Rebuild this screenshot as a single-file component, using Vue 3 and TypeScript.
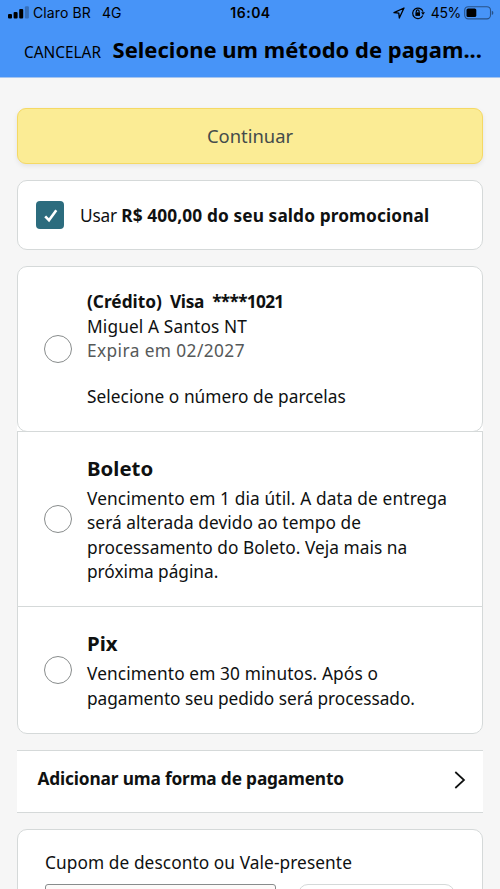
<script setup lang="ts">
import { ref } from 'vue'

interface Line {
  text: string
  fit: string
}

interface Method {
  id: string
  title: string
  lines: Line[]
}

const useBalance = ref(true)
const selected = ref<string | null>(null)

const methods: Method[] = [
  {
    id: 'boleto',
    title: 'Boleto',
    lines: [
      { text: 'Vencimento em 1 dia útil. A data de entrega', fit: 'fit-wide' },
      { text: 'será alterada devido ao tempo de', fit: 'fit-mid' },
      { text: 'processamento do Boleto. Veja mais na', fit: 'fit-base' },
      { text: 'próxima página.', fit: 'fit-snug' },
    ],
  },
  {
    id: 'pix',
    title: 'Pix',
    lines: [
      { text: 'Vencimento em 30 minutos. Após o', fit: 'fit-wide' },
      { text: 'pagamento seu pedido será processado.', fit: 'fit-snug' },
    ],
  },
]
</script>

<template>
  <div class="screen">
    <header class="header">
      <div class="status">
        <div class="status-left">
          <svg class="signal" viewBox="0 0 21 13" width="21" height="13">
            <rect x="0" y="8" width="4" height="4.6" rx="1.1" />
            <rect x="5.6" y="6" width="4" height="6.6" rx="1.1" />
            <rect x="11.2" y="3" width="4" height="9.6" rx="1.1" />
            <rect x="16.9" y="0.2" width="4" height="12.4" rx="1.1" opacity="0.25" />
          </svg>
          <span class="carrier">Claro BR</span>
          <span class="network">4G</span>
        </div>
        <span class="clock">16:04</span>
        <div class="status-right">
          <svg class="locate" viewBox="0 0 12 12" width="12" height="12">
            <path d="M11 1 L1 5.7 L5.8 6.2 L6.3 11 Z" />
          </svg>
          <svg class="rotation" viewBox="0 0 14 14" width="14" height="14">
            <path class="ring" d="M11.8 9.6 A5.3 5.3 0 1 1 12 5.6" />
            <path d="M10.1 6.3 H14 L12 9 Z" />
            <path d="M4.4 6.3 H9 V9.9 H4.4 Z" />
            <path class="ring" d="M5.3 6.6 V5.3 A1.4 1.4 0 0 1 8.1 5.3 V6.6" />
          </svg>
          <span class="percent">45%</span>
          <svg class="battery" viewBox="0 0 30 14" width="30" height="14">
            <rect class="case" x="0.7" y="0.7" width="25.8" height="12.2" rx="3.6" />
            <rect x="2.5" y="2.5" width="9.8" height="8.6" rx="1.6" />
            <path class="tip" d="M27.8 4.8 Q29.4 5.4 29.4 6.9 Q29.4 8.4 27.8 9 Z" />
          </svg>
        </div>
      </div>
      <div class="nav">
        <span class="cancel">CANCELAR</span>
        <h1 class="title">Selecione um método de pagam...</h1>
      </div>
    </header>

    <main class="content">
      <button class="continue" type="button">Continuar</button>

      <section class="card balance" @click="useBalance = !useBalance">
        <span class="check" :class="{ on: useBalance }">
          <svg v-if="useBalance" viewBox="0 0 28 28" width="28" height="28">
            <path d="M9.2 15.3 L13 19.2 L20.3 9.2" />
          </svg>
        </span>
        <p class="balance-text">
          <span class="use">Usar </span><b>R$ 400,00 do seu saldo promocional</b>
        </p>
      </section>

      <div class="methods">
        <section class="method card credit" @click="selected = 'visa'">
          <span class="radio" :class="{ on: selected === 'visa' }"></span>
          <div class="body">
            <p class="line strong">
              <span>(Crédito)</span><span class="brand">Visa</span><span class="digits">****1021</span>
            </p>
            <p class="line fit-wide">Miguel A Santos NT</p>
            <p class="line muted">Expira em 02/2027</p>
            <p class="line note fit-base">Selecione o número de parcelas</p>
          </div>
        </section>
        <section
          v-for="m in methods"
          :key="m.id"
          class="method"
          :class="m.id"
          @click="selected = m.id"
        >
          <span class="radio" :class="{ on: selected === m.id }"></span>
          <div class="body">
            <h2 class="name">{{ m.title }}</h2>
            <p v-for="l in m.lines" :key="l.text" class="line" :class="l.fit">{{ l.text }}</p>
          </div>
        </section>
      </div>

      <section class="add">
        <span class="add-label">Adicionar uma forma de pagamento</span>
        <svg viewBox="0 0 12 18" width="12" height="18">
          <path d="M1.3 1 L10 9 L1.3 17" />
        </svg>
      </section>

      <section class="card coupon">
        <label class="coupon-label">Cupom de desconto ou Vale-presente</label>
        <div class="coupon-row">
          <div class="field"></div>
          <div class="apply"></div>
        </div>
      </section>
    </main>
  </div>
</template>

<style>
body {
  margin: 0;
  overflow: hidden;
}
</style>

<style scoped>
.screen {
  width: 500px;
  height: 889px;
  overflow: hidden;
  background: #f6f6f6;
  color: #0f1111;
  font-family: 'Noto Sans', sans-serif;
  font-size: 17.3px;
  line-height: 24.2px;
}
p, h1, h2 {
  margin: 0;
}
.header {
  height: 78px;
  box-sizing: border-box;
  background: #4794f8;
  border-bottom: 1px solid #a5c5f0;
  color: #000;
}
.status {
  display: grid;
  grid-template-columns: 1fr auto 1fr;
  height: 25px;
  align-items: center;
  padding: 0 6px 0 8px;
  font-family: Inter, sans-serif;
  font-size: 14px;
  line-height: 25px;
}
.status-left, .status-right {
  display: flex;
  align-items: center;
}
.status-right {
  justify-content: flex-end;
}
.signal {
  margin-right: 4px;
}
.carrier {
  letter-spacing: 0.12px;
}
.network {
  margin-left: 11px;
}
.clock {
  font-weight: 600;
  letter-spacing: 0.5px;
  margin-right: 1px;
}
.locate {
  fill: none;
  stroke: #000;
  stroke-width: 1.3;
  stroke-linejoin: round;
  margin-right: 6px;
}
.rotation {
  margin-right: 6px;
}
.ring {
  fill: none;
  stroke: #000;
  stroke-width: 1.2;
}
.percent {
  letter-spacing: -0.35px;
  margin-right: 3px;
}
.case {
  fill: none;
  stroke: #000;
  stroke-opacity: 0.45;
  stroke-width: 1.1;
}
.tip {
  opacity: 0.45;
}
.nav {
  display: flex;
  align-items: baseline;
  padding: 9px 0 0 24px;
}
.cancel {
  font-size: 15.4px;
  margin-right: 11.5px;
}
.title {
  font-size: 22px;
  line-height: 30px;
  font-weight: 700;
  white-space: nowrap;
}
.content {
  padding: 30px 17px 0;
}
.continue {
  display: block;
  width: 100%;
  height: 56px;
  padding: 0;
  border: 1px solid #f5d964;
  border-radius: 9px;
  background: #fbec95;
  box-shadow: 0 2px 5px rgba(15, 17, 17, 0.08);
  color: #444b4b;
  font: 18.4px/54px 'Noto Sans', sans-serif;
}
.card {
  background: #fff;
  border: 1px solid #d5d9d9;
  border-radius: 10px;
  box-sizing: border-box;
}
.balance {
  display: flex;
  align-items: center;
  height: 70px;
  margin-top: 16px;
  padding-left: 18px;
}
.check {
  width: 28px;
  height: 28px;
  border-radius: 4px;
  border: 1px solid #888c8c;
  box-sizing: border-box;
}
.check.on {
  border: 0;
  background: #2c6c7e;
}
.check svg {
  display: block;
  fill: none;
  stroke: #fff;
  stroke-width: 2.6;
}
.balance-text {
  margin-left: 16px;
  padding-top: 2px;
  white-space: pre;
}
.use {
  letter-spacing: -0.2px;
}
.balance-text b {
  letter-spacing: 0.11px;
}
.methods {
  margin-top: 16px;
  background: #fff;
  border-radius: 10px;
}
.method {
  display: flex;
  align-items: center;
  box-sizing: border-box;
  padding-left: 25.5px;
  background: #fff;
  border: 1px solid #d5d9d9;
}
.credit {
  height: 166px;
}
.boleto {
  height: 176px;
  margin-top: -1px;
}
.pix {
  height: 128px;
  margin-top: -1px;
  border-radius: 0 0 10px 10px;
}
.radio {
  flex: none;
  width: 28px;
  height: 28px;
  box-sizing: border-box;
  border: 1px solid #888c8c;
  border-radius: 50%;
}
.radio.on {
  border: 8px solid #2c6c7e;
}
.body {
  margin-left: 15.5px;
}
.credit .body {
  padding-top: 1px;
}
.line {
  white-space: nowrap;
}
.strong {
  font-weight: 700;
}
.muted {
  color: #565959;
  letter-spacing: 0.41px;
}
.brand {
  margin-left: 8px;
  letter-spacing: -0.3px;
}
.digits {
  margin-left: 8px;
  letter-spacing: -0.7px;
}
.note {
  margin-top: 21.6px;
}
.name {
  font-size: 20.4px;
  line-height: 28px;
  font-weight: 700;
  margin-bottom: 5.2px;
}
.fit-wide {
  letter-spacing: 0.124px;
}
.fit-mid {
  letter-spacing: 0.06px;
}
.fit-base {
  letter-spacing: 0.03px;
}
.fit-snug {
  letter-spacing: -0.045px;
}
.add {
  display: flex;
  align-items: center;
  justify-content: space-between;
  box-sizing: border-box;
  height: 63px;
  margin-top: 16px;
  padding: 0 17px 4px 20.5px;
  background: #fff;
  border: solid #d5d9d9;
  border-width: 1px 0;
  font-weight: 700;
}
.add-label {
  letter-spacing: -0.16px;
}
.add svg {
  fill: none;
  stroke: #0f1111;
  stroke-width: 1.7;
}
.coupon {
  height: 160px;
  margin-top: 16px;
  padding: 20.5px 27px;
}
.coupon-label {
  display: block;
  letter-spacing: 0.075px;
}
.coupon-row {
  display: flex;
  gap: 22px;
  margin-top: 9.3px;
}
.field {
  width: 231px;
  height: 48px;
  box-sizing: border-box;
  border: 1px solid #888c8c;
  border-radius: 3px;
  background: #fcfaf9;
}
.apply {
  flex: 1;
  height: 48px;
  box-sizing: border-box;
  border: 1px solid #d5d9d9;
  border-radius: 10px;
}
</style>
